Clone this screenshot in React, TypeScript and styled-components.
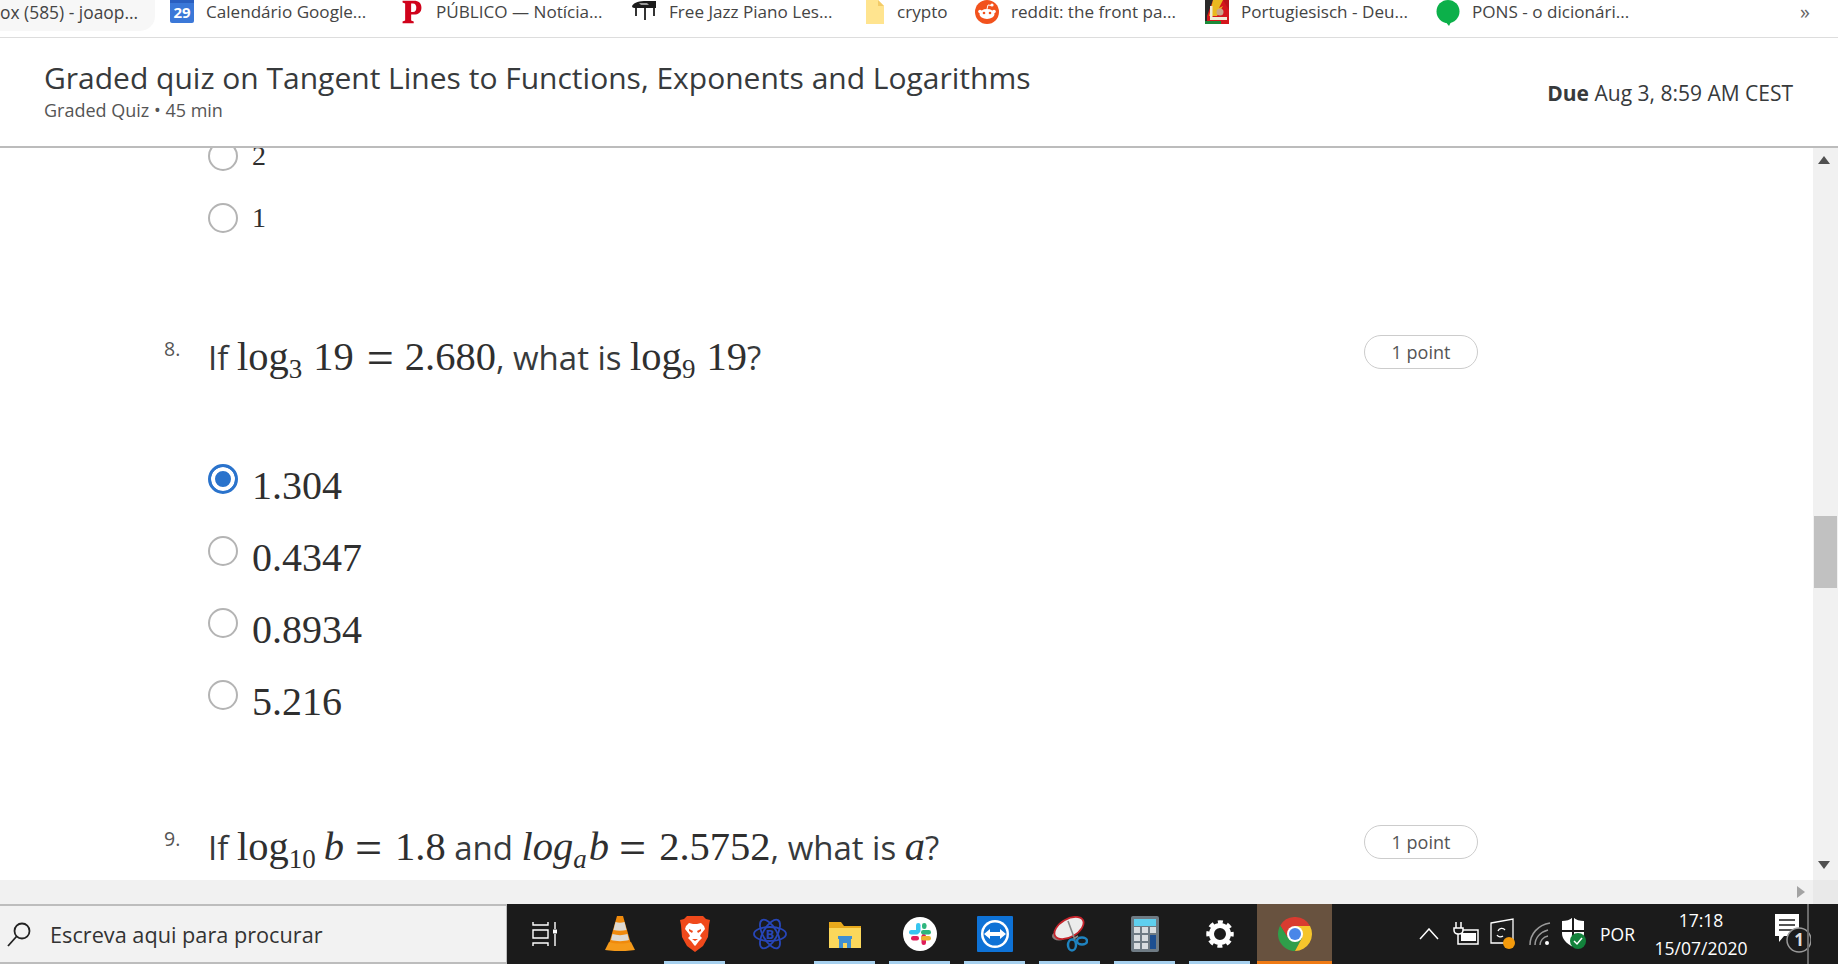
import React from 'react';
import styled, { createGlobalStyle } from 'styled-components';

const GlobalStyle = createGlobalStyle`
  html, body {
    margin: 0;
    padding: 0;
    background: #fff;
    overflow: hidden;
  }
  * { box-sizing: border-box; }
`;

const Screen = styled.div`
  width: 1838px;
  height: 964px;
  display: flex;
  flex-direction: column;
  font-family: "Open Sans", "Liberation Sans", sans-serif;
  color: #373a3c;
  overflow: hidden;
`;

/* bookmarks bar */
const Bookmarks = styled.div`
  height: 38px;
  flex: none;
  display: flex;
  align-items: flex-start;
  border-bottom: 1px solid #dddddd;
  background: #fff;
  overflow: hidden;
`;

const FirstTab = styled.div`
  width: 155px;
  height: 31px;
  margin-right: 15px;
  background: #f7f7f7;
  border-bottom-right-radius: 15px;
  font-size: 17.4px;
  line-height: 24px;
  color: #444;
  white-space: nowrap;
  overflow: hidden;
`;

const Bookmark = styled.div<{ $w: number }>`
  width: ${p => p.$w}px;
  flex: none;
  display: flex;
  align-items: flex-start;
  gap: 12px;
  height: 24px;
  font-size: 17.1px;
  line-height: 24px;
  color: #444;
  white-space: nowrap;
  svg {
    flex: none;
  }
`;

const More = styled.div`
  margin-left: auto;
  margin-right: 28px;
  font-size: 20px;
  line-height: 24px;
  color: #666;
`;

/* quiz header */
const Header = styled.header`
  height: 110px;
  flex: none;
  display: flex;
  justify-content: space-between;
  align-items: center;
  padding: 0 45px 4px 44px;
  border-bottom: 2px solid #bcbcbc;
`;

const Title = styled.h1`
  margin: 0;
  font-size: 30px;
  line-height: 40px;
  font-weight: 400;
  color: #373a3c;
`;

const Subtitle = styled.div`
  font-size: 18px;
  line-height: 24px;
  color: #555;
`;

const Due = styled.div`
  font-size: 21px;
  line-height: 28px;
  margin-top: 5px;
  b { font-weight: 700; }
`;

/* main scroll area */
const Main = styled.div`
  height: 732px;
  flex: none;
  display: flex;
  overflow: hidden;
`;

const Page = styled.main`
  flex: 1;
  padding: 0 337px 0 164px;
  overflow: hidden;
`;

const Options = styled.div<{ $top: number }>`
  margin: ${p => p.$top}px 0 0 44px;
`;

const Option = styled.div<{ $h: number; $size: number }>`
  height: ${p => p.$h}px;
  display: flex;
  align-items: center;
  gap: 14px;
  font-family: "Liberation Serif", "Times New Roman", serif;
  font-size: ${p => p.$size}px;
  color: #2f2f2f;
`;

const Radio = styled.span<{ $on?: boolean }>`
  width: 30px;
  height: 30px;
  flex: none;
  border-radius: 50%;
  border: ${p => (p.$on ? '3px solid #2a73cc' : '2.5px solid #b4b4b4')};
  background: ${p => (p.$on ? '#2a73cc' : '#fff')};
  box-shadow: ${p => (p.$on ? 'inset 0 0 0 4px #fff' : 'none')};
`;

const OptionText = styled.span<{ $drop?: number }>`
  margin-top: ${p => p.$drop ?? 0}px;
`;

const Question = styled.section<{ $top: number }>`
  margin-top: ${p => p.$top}px;
  height: 50px;
  display: grid;
  grid-template-columns: 44px 1fr 114px;
`;

const Num = styled.div`
  font-size: 19.5px;
  line-height: 34px;
  color: #555;
`;

const Prompt = styled.div`
  font-size: 33px;
  line-height: 50px;
  color: #373a3c;
  white-space: nowrap;
`;

const Math = styled.span<{ $l?: number; $r?: number; $it?: boolean }>`
  font-family: "Liberation Serif", "Times New Roman", serif;
  font-size: 40.5px;
  font-style: ${p => (p.$it ? 'italic' : 'normal')};
  color: #2f2f2f;
  margin-left: ${p => p.$l ?? 0}px;
  margin-right: ${p => p.$r ?? 0}px;
`;

const Eq = styled.span<{ $l: number; $r: number }>`
  font-family: "Liberation Serif", "Times New Roman", serif;
  font-size: 48px;
  line-height: 0;
  vertical-align: -4px;
  color: #2f2f2f;
  margin-left: ${p => p.$l}px;
  margin-right: ${p => p.$r}px;
`;

const Sub = styled.sub<{ $r?: number }>`
  font-size: 27px;
  line-height: 0;
  vertical-align: -8px;
  margin-right: ${p => p.$r ?? 0}px;
`;

const Points = styled.div`
  height: 34px;
  margin-top: 3px;
  border: 1.5px solid #cccccc;
  border-radius: 17px;
  display: flex;
  align-items: center;
  justify-content: center;
  font-size: 18px;
  color: #555;
`;

/* scrollbars */
const VScroll = styled.div`
  width: 25px;
  flex: none;
  margin-left: -2px;
  display: flex;
  flex-direction: column;
  align-items: stretch;
  background: #f1f1f1;
`;

const ArrowBox = styled.div<{ $after?: number }>`
  height: 23px;
  flex: none;
  display: flex;
  align-items: center;
  justify-content: center;
  padding-right: 4px;
  margin-top: ${p => p.$after ?? 0}px;
`;

const Thumb = styled.div`
  height: 72px;
  flex: none;
  margin: 345px 1px 0 1px;
  background: #c1c1c1;
`;

const HScroll = styled.div`
  height: 24px;
  flex: none;
  display: flex;
  justify-content: flex-end;
  align-items: center;
  background: #f1f1f1;
`;

const Corner = styled.div`
  width: 25px;
  height: 24px;
  margin-left: 8px;
  background: #e9e9e9;
`;

/* taskbar */
const Taskbar = styled.footer`
  height: 60px;
  flex: none;
  display: flex;
  background: #1b1b1b;
  color: #fff;
`;

const Search = styled.div`
  width: 507px;
  flex: none;
  display: flex;
  align-items: center;
  gap: 18px;
  padding: 0 0 0 6px;
  background: #f2f2f2;
  border-top: 2px solid #bdbdbd;
  border-bottom: 2px solid #bdbdbd;
  border-right: 1px solid #bdbdbd;
  color: #333;
  font-size: 21.7px;
`;

const TaskIcon = styled.div<{ $state?: 'open' | 'active' }>`
  width: 75px;
  flex: none;
  display: flex;
  align-items: center;
  justify-content: center;
  padding-bottom: 1px;
  background: ${p => (p.$state === 'active' ? '#68523f' : 'transparent')};
  box-shadow: ${p => (p.$state === 'active' ? 'inset 0 -3px 0 #ef7a14' : 'none')};
  position: relative;
  &::after {
    content: '';
    display: ${p => (p.$state === 'open' ? 'block' : 'none')};
    position: absolute;
    left: 7px;
    right: 7px;
    bottom: 0;
    height: 3px;
    background: #a6d0ee;
  }
`;

const Tray = styled.div`
  margin-left: 78px;
  display: flex;
  align-items: center;
`;

const TrayIcon = styled.div<{ $w: number }>`
  width: ${p => p.$w}px;
  flex: none;
  display: flex;
  justify-content: center;
`;

const Lang = styled.div`
  width: 56px;
  font-size: 17.5px;
  padding-left: 10px;
`;

const Clock = styled.div`
  width: 110px;
  text-align: center;
  font-size: 17.5px;
  line-height: 28px;
`;

const Notif = styled.div`
  width: 50px;
  padding-left: 19px;
  display: flex;
  svg { flex: none; }
`;

const DesktopEdge = styled.div`
  width: 2px;
  height: 60px;
  margin-left: 1px;
  background: #6a6a6a;
`;

/* icons */
const CalendarIcon = () => (
  <svg width="24" height="23" viewBox="0 0 24 23">
    <rect width="24" height="23" rx="2" fill="#3b78d8" />
    <rect width="24" height="3" fill="#2a5fc0" />
    <text x="12" y="18" textAnchor="middle" fontSize="15" fontWeight="700" fontFamily="Open Sans" fill="#fff">29</text>
  </svg>
);

const PublicoIcon = () => (
  <svg width="24" height="24" viewBox="0 0 24 28">
    <path d="M1 1h13c6 0 9 3 9 8s-3 8-9 8h-3v7l3 1v2H1v-2l3-1V4L1 3z" fill="#d0021b" />
    <path d="M11 4v10h2c3 0 4-2 4-5s-1-5-4-5z" fill="#fff" />
  </svg>
);

const PianoIcon = () => (
  <svg width="25" height="20" viewBox="0 0 25 20">
    <path d="M0 6C2 2 8 1 14 1h10v7H4C2 8 0 8 0 6z" fill="#1c1c1c" />
    <path d="M7 3h8l2 2H9z" fill="#9a9a9a" />
    <path d="M3 8h2v8H3zM12 8h2v12h-2zM21 8h2v8h-2z" fill="#333" />
  </svg>
);

const NoteIcon = () => (
  <svg width="20" height="24" viewBox="0 0 20 24">
    <path d="M1 0h12l6 6v18H1z" fill="#ffe48f" />
    <path d="M13 0l6 6h-6z" fill="#f3cb68" />
  </svg>
);

const RedditIcon = () => (
  <svg width="24" height="24" viewBox="0 0 24 24">
    <circle cx="12" cy="12" r="12" fill="#f2521d" />
    <ellipse cx="12" cy="14" rx="7.5" ry="5" fill="#fff" />
    <circle cx="5" cy="11.5" r="1.8" fill="#fff" />
    <circle cx="19" cy="11.5" r="1.8" fill="#fff" />
    <circle cx="17" cy="5" r="1.6" fill="#fff" />
    <path d="M12 9l1-4 4 .5" fill="none" stroke="#fff" />
    <circle cx="9" cy="13" r="1.3" fill="#f2521d" />
    <circle cx="15" cy="13" r="1.3" fill="#f2521d" />
  </svg>
);

const DictIcon = () => (
  <svg width="24" height="24" viewBox="0 0 24 24">
    <rect width="24" height="24" fill="#d4161c" />
    <path d="M0 0h8L2 16v8H0z" fill="#2a2a2a" />
    <path d="M8 0h10l-4 8 4-2-6 10H4z" fill="#e9b81f" />
    <path d="M18 0h6v10z" fill="#b8131a" />
    <circle cx="15" cy="12" r="3.5" fill="#c9a58a" />
    <path d="M5 6h2.500v11H22v3H5z" fill="#f1ecd8" />
    <path d="M0 21h16v3H0z" fill="#1c8a3a" />
  </svg>
);

const PonsIcon = () => (
  <svg width="24" height="26" viewBox="0 0 24 26">
    <ellipse cx="12" cy="11.5" rx="11.5" ry="11.5" fill="#0cb04a" />
    <path d="M8 20h8l-3 6z" fill="#0cb04a" />
  </svg>
);

const ArrowUp = () => (
  <svg width="12" height="8" viewBox="0 0 12 8"><path d="M6 0l6 8H0z" fill="#505050" /></svg>
);

const ArrowDown = () => (
  <svg width="12" height="8" viewBox="0 0 12 8"><path d="M6 8L0 0h12z" fill="#505050" /></svg>
);

const ArrowRight = () => (
  <svg width="8" height="12" viewBox="0 0 8 12"><path d="M8 6L0 12V0z" fill="#a3a3a3" /></svg>
);

const MagnifierIcon = () => (
  <svg width="26" height="26" viewBox="0 0 26 26" fill="none" stroke="#222" strokeWidth="1.8">
    <circle cx="16" cy="10" r="7.5" />
    <path d="M10.5 15.5L2 25" />
  </svg>
);

const TaskViewIcon = () => (
  <svg width="26" height="24" viewBox="0 0 26 24" fill="none" stroke="#fff" strokeWidth="1.4">
    <path d="M1 0v3h15V0M1 8h15v8H1zM1 24v-3h15v3" />
    <path d="M23 0v7M23 12v12" />
    <rect x="21" y="7.500" width="4" height="4" fill="#fff" stroke="none" />
  </svg>
);

const VlcIcon = () => (
  <svg width="30" height="35" viewBox="0 0 30 35">
    <path d="M12 0h6l8 28H4z" fill="#f08a0c" />
    <path d="M10.500 6c3 1 6 1 9 0l2 8c-4 1-9 1-13 0z" fill="#dedad2" />
    <path d="M7.500 18c5 1.500 10 1.500 15 0l1.500 6c-5 1.500-13 1.500-18 0z" fill="#dedad2" />
    <path d="M4 26c6 2 16 2 22 0l4 8c-8 1.500-22 1.500-30 0z" fill="#f59a1a" />
  </svg>
);

const BraveIcon = () => (
  <svg width="30" height="36" viewBox="0 0 30 36">
    <path d="M7 0h16l3 3 4 1-1 5-1 12-5 9-8 6-8-6-5-9L1 9 0 4l4-1z" fill="#f0491b" />
    <path d="M9 7l4 1h4l4-1 3 3 1 3-4 5-1 2 2 2-3 3-3 4-1 1-1-1-3-4-3-3 2-2-1-2-4-5 1-3z" fill="#fff" />
    <path d="M9 13l4 2-1 2-3-2zM21 13l-4 2 1 2 3-2zM12 23h6l-3 2z" fill="#f0491b" />
  </svg>
);

const AtomIcon = () => (
  <svg width="34" height="36" viewBox="0 0 34 36" fill="none" stroke="#2746b8" strokeWidth="1.800">
    <ellipse cx="17" cy="18" rx="16" ry="7" />
    <ellipse cx="17" cy="18" rx="16" ry="7" transform="rotate(60 17 18)" />
    <ellipse cx="17" cy="18" rx="16" ry="7" transform="rotate(120 17 18)" />
    <text x="17" y="23" textAnchor="middle" fontSize="13" fontWeight="700" fontFamily="Open Sans" fill="#2746b8" stroke="none">B</text>
  </svg>
);

const FilesIcon = () => (
  <svg width="32" height="28" viewBox="0 0 32 28">
    <path d="M0 2h12l3 4h17v22H0z" fill="#e8a91c" />
    <rect x="0" y="8" width="32" height="20" fill="#fbd75b" />
    <path d="M10 28v-9h12v9h-4v-5h-4v5z" fill="#3f8fd2" />
    <rect x="9" y="16" width="14" height="3" fill="#3f8fd2" />
  </svg>
);

const SlackIcon = () => (
  <svg width="34" height="34" viewBox="0 0 34 34">
    <circle cx="17" cy="17" r="17" fill="#fff" />
    <rect x="13" y="6" width="4.500" height="10" rx="2.200" fill="#36c5f0" />
    <rect x="6" y="13" width="10" height="4.500" rx="2.200" fill="#36c5f0" />
    <rect x="18.500" y="17" width="4.500" height="11" rx="2.200" fill="#e01e5a" />
    <rect x="8" y="19" width="8" height="4.500" rx="2.200" fill="#e01e5a" />
    <rect x="18" y="13" width="10" height="4.500" rx="2.200" fill="#2eb67d" />
    <rect x="19" y="6" width="4.500" height="6" rx="2.200" fill="#2eb67d" />
    <rect x="18" y="19" width="10" height="4.500" rx="2.200" fill="#ecb22e" />
  </svg>
);

const TeamViewerIcon = () => (
  <svg width="36" height="36" viewBox="0 0 36 36">
    <rect width="36" height="36" rx="1" fill="#0e72d6" />
    <circle cx="18" cy="18" r="14" fill="#fff" />
    <circle cx="18" cy="18" r="11.500" fill="#0e72d6" />
    <path d="M7 18l6-5v3h10v-3l6 5-6 5v-3H13v3z" fill="#fff" />
  </svg>
);

const SnipIcon = () => (
  <svg width="36" height="36" viewBox="0 0 36 36">
    <ellipse cx="7" cy="20" rx="7" ry="4.500" fill="#8c7b7b" />
    <ellipse cx="17" cy="12" rx="16" ry="9" transform="rotate(-30 17 12)" fill="#ececec" stroke="#c5242c" strokeWidth="1.800" />
    <path d="M16 5l7 19M20 24l6-4" stroke="#8a8a8a" strokeWidth="1.600" fill="none" />
    <ellipse cx="20" cy="29" rx="4" ry="5.500" fill="none" stroke="#1f83c0" strokeWidth="2.500" />
    <ellipse cx="30" cy="25" rx="5" ry="3.500" fill="none" stroke="#1f83c0" strokeWidth="2.500" />
  </svg>
);

const CalcIcon = () => (
  <svg width="28" height="36" viewBox="0 0 28 36">
    <rect width="28" height="36" rx="2" fill="#6f7b84" />
    <rect x="3" y="3" width="22" height="7" fill="#5fd0ef" />
    {[0, 1, 2].map(r =>
      [0, 1, 2].map(c =>
        r > 0 && c === 2 ? null : (
          <rect key={`${r}-${c}`} x={3 + c * 8} y={11 + r * 8} width="6" height="6" fill="#d9dde0" />
        ),
      ),
    )}
    <rect x="19" y="19" width="6" height="14" fill="#1d4f91" />
  </svg>
);

const GearIcon = () => (
  <svg width="28" height="28" viewBox="0 0 28 28" fill="none" stroke="#fff">
    <circle cx="14" cy="14" r="8.500" strokeWidth="5" />
    <circle cx="14" cy="14" r="12" strokeWidth="3.500" strokeDasharray="5 4.420" strokeDashoffset="2.500" />
  </svg>
);

const ChromeIcon = () => (
  <svg width="34" height="34" viewBox="0 0 34 34">
    <path d="M32 9A17 17 0 0 0 2.200 8.600L10 21l7-12z" fill="#d93b30" />
    <path d="M2.200 8.600A17 17 0 0 0 17 34l7-13H10z" fill="#2f9e4a" />
    <path d="M17 34A17 17 0 0 0 32 9H17l7 12z" fill="#f5c52c" />
    <circle cx="17" cy="17" r="8" fill="#fff" />
    <circle cx="17" cy="17" r="6" fill="#4a86e8" />
  </svg>
);

const ChevronIcon = () => (
  <svg width="20" height="12" viewBox="0 0 20 12" fill="none" stroke="#fff" strokeWidth="1.500">
    <path d="M1 11l9-10 9 10" />
  </svg>
);

const BatteryIcon = () => (
  <svg width="26" height="26" viewBox="0 0 26 26" fill="none" stroke="#fff" strokeWidth="1.500">
    <rect x="5" y="9" width="20" height="14" fill="#1b1b1b" />
    <rect x="8" y="12" width="15" height="8" fill="#fff" stroke="none" />
    <path d="M3 1v6M8 1v6M1 7h9v2c0 3-2 4-4.500 4S1 12 1 9z" fill="#1b1b1b" />
  </svg>
);

const SyncIcon = () => (
  <svg width="26" height="32" viewBox="0 0 26 32" fill="none" stroke="#fff" strokeWidth="1.300">
    <path d="M1 5L23 1v24H1z" />
    <path d="M8 13a4 4 0 0 1 7-1M13 18a4 4 0 0 1-6-1" />
    <circle cx="19" cy="25" r="6" fill="#f39a0c" stroke="none" />
  </svg>
);

const WifiIcon = () => (
  <svg width="24" height="26" viewBox="0 0 24 26" fill="none" stroke="#9a9a9a" strokeWidth="1.500">
    <path d="M2 24C2 13 10 4 22 2M7 24c0-7 5-13 13-15M12 24c0-4 3-8 8-9" />
    <circle cx="19" cy="22" r="2" fill="#fff" stroke="none" />
  </svg>
);

const ShieldIcon = () => (
  <svg width="26" height="34" viewBox="0 0 26 34">
    <path d="M12 0C9 3 5 4 1 4v12c0 6 4 10 11 14 7-4 11-8 11-14V4c-4 0-8-1-11-4z" fill="#fff" />
    <path d="M11 0h2v30h-2zM1 13h22v2H1z" fill="#1b1b1b" />
    <circle cx="17" cy="24" r="8" fill="#12823b" />
    <path d="M13 24l3 3 5-6" fill="none" stroke="#fff" strokeWidth="1.500" />
  </svg>
);

const NotifIcon = () => (
  <svg width="36" height="40" viewBox="0 0 36 40">
    <path d="M0 0h24v22h-15l-5 6v-6H0z" fill="#fff" />
    <path d="M4 6h16M4 11h16M4 16h16" stroke="#1b1b1b" strokeWidth="1.500" />
    <circle cx="24" cy="26" r="12" fill="#1b1b1b" stroke="#9a9a9a" strokeWidth="1.500" />
    <text x="24" y="32" textAnchor="middle" fontSize="17" fontWeight="700" fontFamily="Open Sans" fill="#ddd">1</text>
  </svg>
);

const bookmarks = [
  { icon: <CalendarIcon />, label: 'Calendário Google...', w: 230 },
  { icon: <PublicoIcon />, label: 'PÚBLICO — Notícia...', w: 232 },
  { icon: <PianoIcon />, label: 'Free Jazz Piano Les...', w: 233 },
  { icon: <NoteIcon />, label: 'crypto', w: 110 },
  { icon: <RedditIcon />, label: 'reddit: the front pa...', w: 230 },
  { icon: <DictIcon />, label: 'Portugiesisch - Deu...', w: 231 },
  { icon: <PonsIcon />, label: 'PONS - o dicionári...', w: 230 },
];

const q8Options = ['1.304', '0.4347', '0.8934', '5.216'];

const taskIcons: { icon: React.ReactNode; state?: 'open' | 'active' }[] = [
  { icon: <TaskViewIcon /> },
  { icon: <VlcIcon /> },
  { icon: <BraveIcon />, state: 'open' },
  { icon: <AtomIcon /> },
  { icon: <FilesIcon />, state: 'open' },
  { icon: <SlackIcon />, state: 'open' },
  { icon: <TeamViewerIcon />, state: 'open' },
  { icon: <SnipIcon />, state: 'open' },
  { icon: <CalcIcon />, state: 'open' },
  { icon: <GearIcon />, state: 'open' },
  { icon: <ChromeIcon />, state: 'active' },
];

export default function App() {
  return (
    <Screen>
      <GlobalStyle />
      <Bookmarks>
        <FirstTab>ox (585) - joaop...</FirstTab>
        {bookmarks.map(b => (
          <Bookmark key={b.label} $w={b.w}>
            {b.icon}
            <span>{b.label}</span>
          </Bookmark>
        ))}
        <More>»</More>
      </Bookmarks>

      <Header>
        <div>
          <Title>Graded quiz on Tangent Lines to Functions, Exponents and Logarithms</Title>
          <Subtitle>Graded Quiz • 45 min</Subtitle>
        </div>
        <Due><b>Due</b> Aug 3, 8:59 AM CEST</Due>
      </Header>

      <Main>
        <Page>
          <Options $top={-23}>
            <Option $h={62} $size={28}><Radio /><OptionText>2</OptionText></Option>
            <Option $h={62} $size={28}><Radio /><OptionText>1</OptionText></Option>
          </Options>

          <Question $top={83}>
            <Num>8.</Num>
            <Prompt>
              If <Math>log<Sub>3</Sub></Math>
              <Math $l={11}>19</Math>
              <Eq $l={13} $r={11}>=</Eq>
              <Math>2.680</Math>, what is <Math>log<Sub>9</Sub></Math>
              <Math $l={11}>19</Math>?
            </Prompt>
            <Points>1 point</Points>
          </Question>

          <Options $top={61}>
            {q8Options.map((o, i) => (
              <Option key={o} $h={72} $size={40}>
                <Radio $on={i === 0} />
                <OptionText $drop={12}>{o}</OptionText>
              </Option>
            ))}
          </Options>

          <Question $top={91}>
            <Num>9.</Num>
            <Prompt>
              If <Math>log<Sub>10</Sub></Math>
              <Math $l={8} $it>b</Math>
              <Eq $l={11} $r={13}>=</Eq>
              <Math>1.8</Math> and <Math $it>log<Sub $r={2}>a</Sub>b</Math>
              <Eq $l={10} $r={13}>=</Eq>
              <Math>2.5752</Math>, what is <Math $it>a</Math>?
            </Prompt>
            <Points>1 point</Points>
          </Question>
        </Page>
        <VScroll>
          <ArrowBox><ArrowUp /></ArrowBox>
          <Thumb />
          <ArrowBox $after={265}><ArrowDown /></ArrowBox>
        </VScroll>
      </Main>

      <HScroll>
        <ArrowRight />
        <Corner />
      </HScroll>

      <Taskbar>
        <Search>
          <MagnifierIcon />
          <span>Escreva aqui para procurar</span>
        </Search>
        {taskIcons.map((t, i) => (
          <TaskIcon key={i} $state={t.state}>{t.icon}</TaskIcon>
        ))}
        <Tray>
          <TrayIcon $w={37}><ChevronIcon /></TrayIcon>
          <TrayIcon $w={37}><BatteryIcon /></TrayIcon>
          <TrayIcon $w={37}><SyncIcon /></TrayIcon>
          <TrayIcon $w={37}><WifiIcon /></TrayIcon>
          <TrayIcon $w={32}><ShieldIcon /></TrayIcon>
          <Lang>POR</Lang>
          <Clock>17:18<br />15/07/2020</Clock>
          <Notif><NotifIcon /></Notif>
          <DesktopEdge />
        </Tray>
      </Taskbar>
    </Screen>
  );
}
